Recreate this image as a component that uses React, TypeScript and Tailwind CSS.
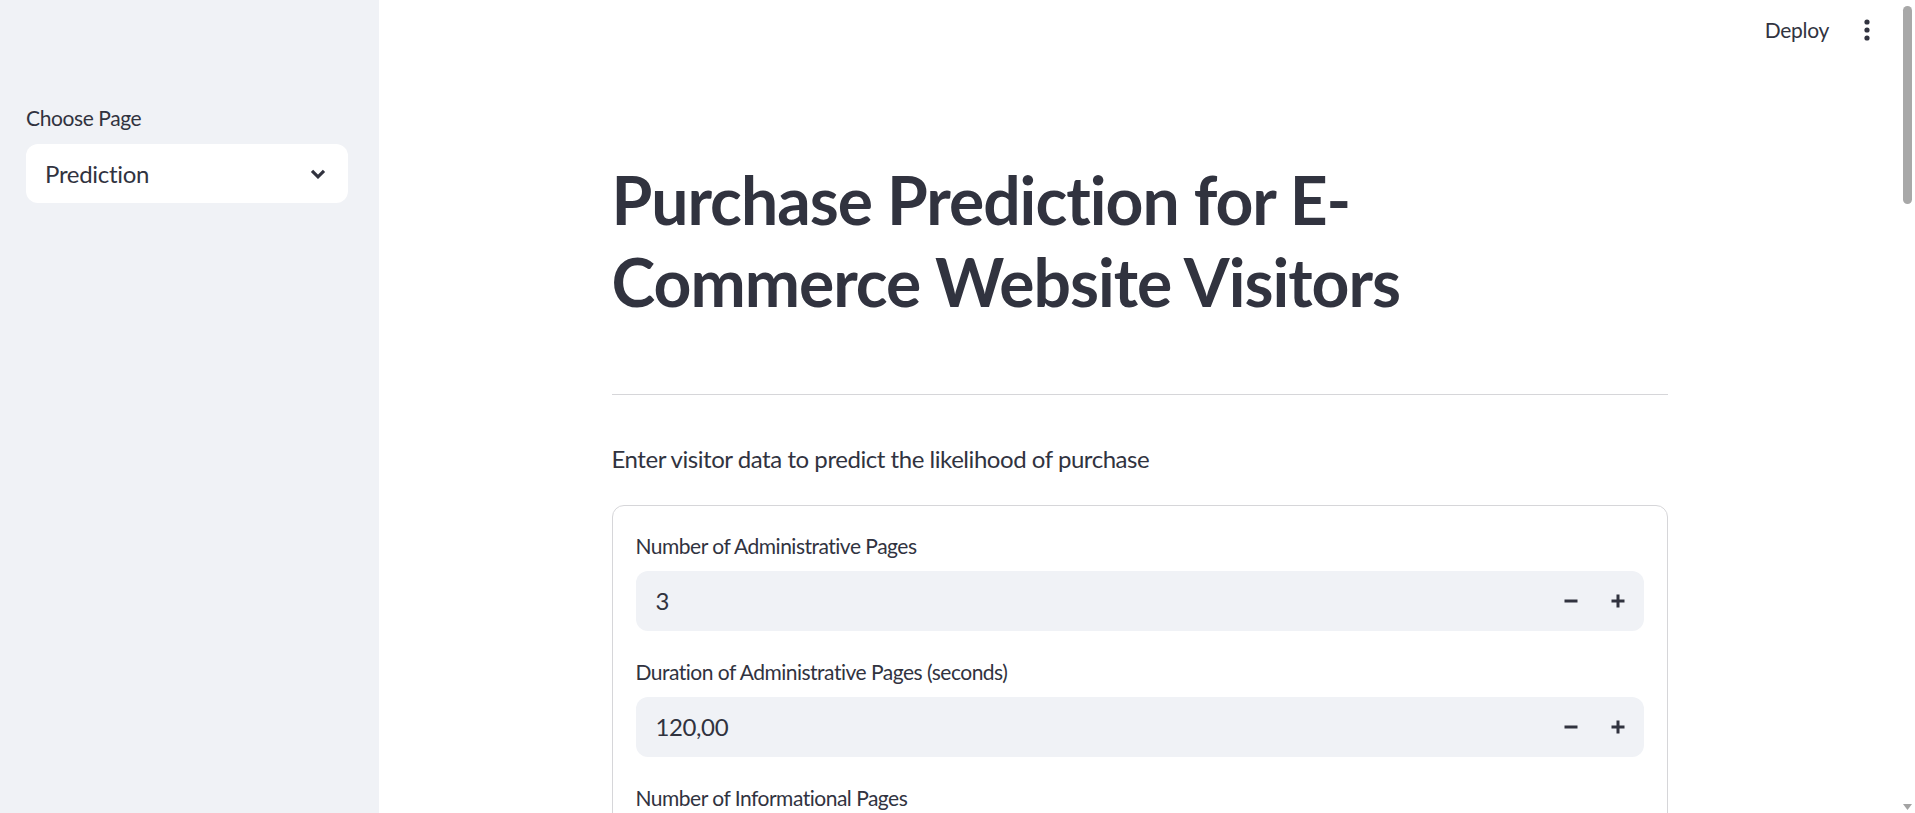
import React from 'react';

const fields = [
  { label: 'Number of Administrative Pages', value: '3' },
  { label: 'Duration of Administrative Pages (seconds)', value: '120,00' },
  { label: 'Number of Informational Pages', value: '0' },
];

const NumberField = ({ label, value }: { label: string; value: string }) => (
  <div className="flex flex-col">
    <div className="mb-[8px] flex h-[34px] items-center text-[21px] tracking-[-0.5px]">{label}</div>
    <div className="flex h-[60px] items-center rounded-[12px] bg-[#f0f2f6] pr-[2px]">
      <span className="flex-1 pl-[20px] text-[24px] tracking-[-0.4px]">{value}</span>
      <button className="flex h-full w-[47px] items-center justify-center">
        <svg width="14" height="14" viewBox="0 0 14 14">
          <rect x="0.5" y="5.5" width="13" height="3" fill="#31333f" />
        </svg>
      </button>
      <button className="flex h-full w-[47px] items-center justify-center">
        <svg width="14" height="14" viewBox="0 0 14 14">
          <rect x="0.5" y="5.5" width="13" height="3" fill="#31333f" />
          <rect x="5.5" y="0.5" width="3" height="13" fill="#31333f" />
        </svg>
      </button>
    </div>
  </div>
);

export default function App() {
  return (
    <div className="flex h-[813px] w-full overflow-hidden bg-white font-['Lato','Noto_Sans',sans-serif] text-[#31333f]">
      {/* sidebar */}
      <aside className="w-[379px] shrink-0 bg-[#f0f2f6] pl-[26px] pr-[31px] pt-[100px]">
        <div className="mb-[8px] flex h-[36px] items-center text-[21px] tracking-[-0.4px]">Choose Page</div>
        <div className="flex h-[59px] items-center justify-between rounded-[12px] bg-white pl-[19px] pr-[22px]">
          <span className="text-[24px] tracking-[-0.3px]">Prediction</span>
          <svg width="16" height="10" viewBox="0 0 16 10" fill="none">
            <path d="M2 1.8l6 6 6-6" stroke="#31333f" strokeWidth="3.2" />
          </svg>
        </div>
      </aside>

      {/* main */}
      <main className="relative flex-1">
        <div className="absolute right-[30px] top-[14px] flex items-center gap-[35px]">
          <span className="text-[21px] tracking-[-0.3px]">Deploy</span>
          <svg width="6" height="22" viewBox="0 0 6 22">
            <circle cx="3" cy="3" r="2.6" fill="#31333f" />
            <circle cx="3" cy="11" r="2.6" fill="#31333f" />
            <circle cx="3" cy="19" r="2.6" fill="#31333f" />
          </svg>
        </div>

        <div className="mx-auto w-[1056px] pt-[159px]">
          <h1 className="text-[66px] font-bold leading-[82px] tracking-[-1px]">
            Purchase Prediction for E-
            <br />
            Commerce Website Visitors
          </h1>
          <hr className="mt-[71px] border-t border-[#d6d6d9]" />
          <p className="mt-[45px] text-[24px] leading-[38px] tracking-[-0.45px]">
            Enter visitor data to predict the likelihood of purchase
          </p>
          <div className="mt-[27px] rounded-[12px] border border-[#d6d6d9] p-[23px]">
            <div className="flex flex-col gap-[24px]">
              {fields.map((f) => (
                <NumberField key={f.label} label={f.label} value={f.value} />
              ))}
            </div>
          </div>
        </div>
      </main>

      {/* scrollbar */}
      <div className="relative w-[15px] shrink-0 bg-white">
        <div className="absolute left-[3px] top-[6px] h-[198px] w-[9px] rounded-full bg-[#a8a8a8]" />
        <svg className="absolute bottom-[3px] left-[3px]" width="9" height="6" viewBox="0 0 9 6">
          <path d="M0 0h9L4.5 6z" fill="#a3a3a3" />
        </svg>
      </div>
    </div>
  );
}
